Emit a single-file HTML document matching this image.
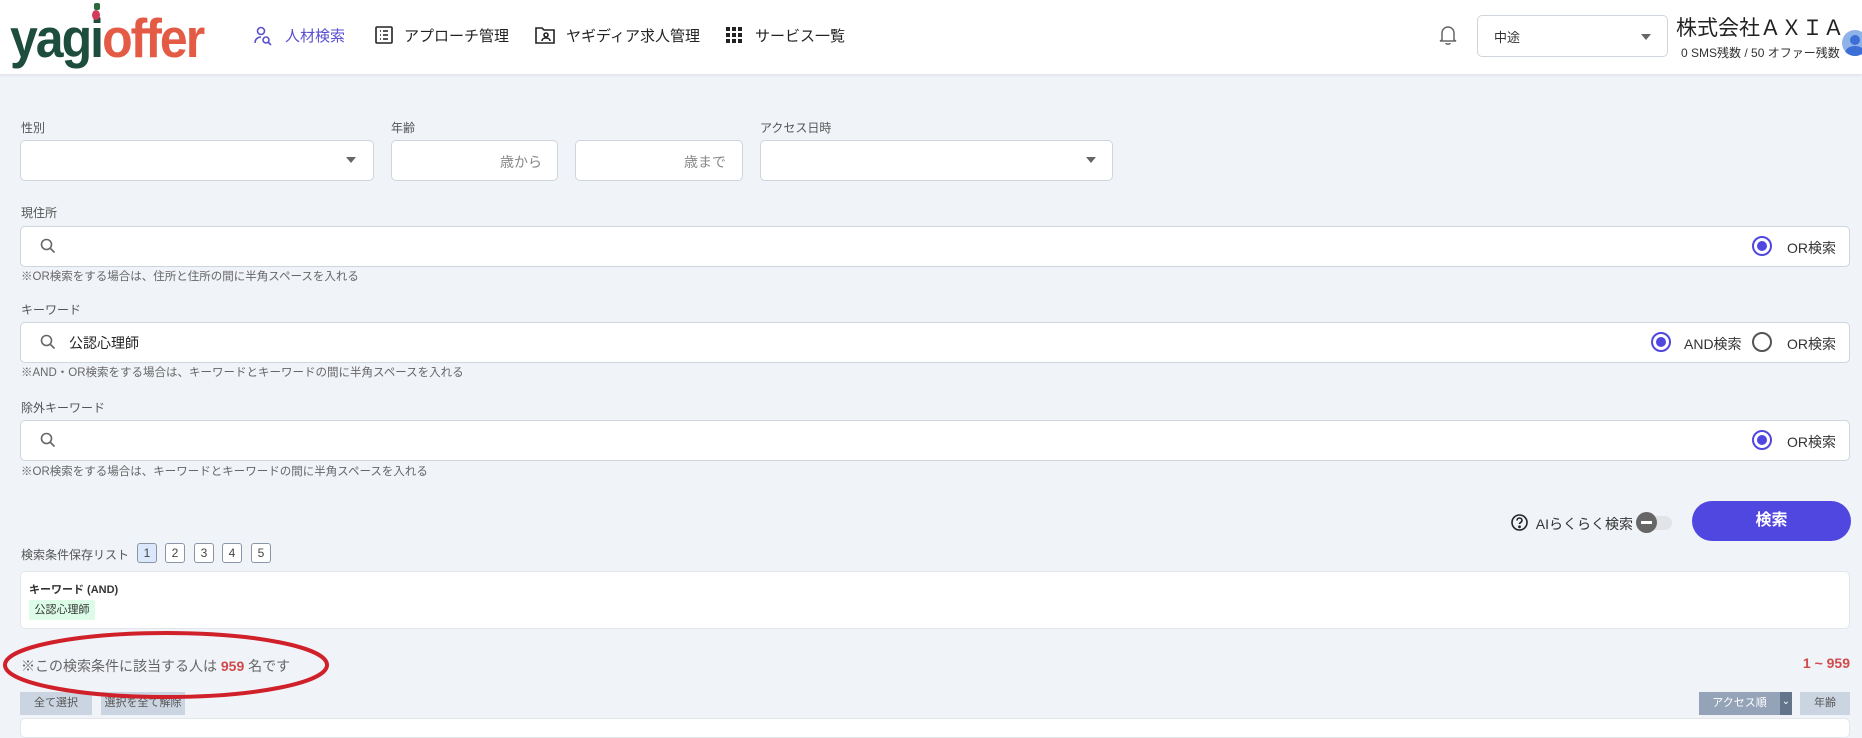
<!DOCTYPE html>
<html><head><meta charset="utf-8">
<style>
*{box-sizing:border-box;margin:0;padding:0}
body{width:1862px;height:725px;overflow:hidden;background:#f0f3f8;font-family:"Liberation Sans","Noto Sans CJK JP",sans-serif;color:#333;position:relative}
.a{position:absolute;white-space:nowrap}
.hdr{position:absolute;left:0;top:0;width:1862px;height:75px;background:#fff;border-bottom:1px solid #e3e6ea;box-shadow:0 1px 3px rgba(0,0,0,.06)}
.nav{font-size:15px;color:#222;top:25px}
.box{position:absolute;background:#fff;border:1px solid #cfd5dd;border-radius:5px}
.lbl{font-size:12px;color:#555}
.note{font-size:11.5px;color:#666}
.tri{position:absolute;width:0;height:0;border-left:5px solid transparent;border-right:5px solid transparent;border-top:6px solid #666}
.radio{position:absolute;width:20px;height:20px;border-radius:50%;border:2px solid #555;background:#fff}
.radio.on{border-color:#5046e0}
.radio.on::after{content:"";position:absolute;left:3px;top:3px;width:10px;height:10px;border-radius:50%;background:#5046e0}
.rt{font-size:14px;color:#333}
.num{position:absolute;top:543px;width:20px;height:20px;border:1px solid #8a96a8;border-radius:3px;font-size:12px;text-align:center;line-height:18px;color:#444;background:#fff}
.btn{position:absolute;font-size:12px;color:#fff;text-align:center}
</style></head><body>
<div class="hdr"></div>
<div class="a" style="left:10px;top:2px;font-size:50px;font-weight:bold;letter-spacing:-2px;line-height:66px;transform:scaleX(1.0) scaleY(1.1);transform-origin:left top"><span style="color:#1d4d3c">yagi</span><span style="color:#e35a45">offer</span></div>
<div class="a" style="left:92px;top:10px;width:8px;height:10px;border-radius:50%;background:#d43a5a"></div>
<div class="a" style="left:94px;top:3px;width:6px;height:7px;background:#2b6b3a;border-radius:2px"></div>

<svg class="a" style="left:253px;top:26px" width="20" height="20" viewBox="0 0 20 20" fill="none" stroke="#5a4fcf" stroke-width="1.6"><circle cx="8" cy="5" r="3.5"/><path d="M2 17c0-4 3-6 6-6"/><circle cx="13" cy="14" r="3"/><path d="M15 16l3 3"/></svg>
<div class="a nav" style="left:285px;color:#5a4fcf">人材検索</div>
<svg class="a" style="left:375px;top:26px" width="18" height="18" viewBox="0 0 18 18" fill="none" stroke="#222" stroke-width="1.6"><rect x="1" y="1" width="16" height="16" rx="1"/><path d="M5 5h1M5 9h1M5 13h1M8 5h5M8 9h5M8 13h5"/></svg>
<div class="a nav" style="left:404px">アプローチ管理</div>
<svg class="a" style="left:535px;top:26px" width="20" height="18" viewBox="0 0 20 18" fill="none" stroke="#222" stroke-width="1.6"><path d="M1 2h6l2 2h10v13H1z"/><circle cx="11" cy="9" r="2"/><path d="M7 15c0-2 2-3 4-3s4 1 4 3"/></svg>
<div class="a nav" style="left:566px">ヤギディア求人管理</div>
<svg class="a" style="left:726px;top:27px" width="16" height="16" viewBox="0 0 16 16" fill="#222"><rect x="0" y="0" width="4" height="4"/><rect x="6" y="0" width="4" height="4"/><rect x="12" y="0" width="4" height="4"/><rect x="0" y="6" width="4" height="4"/><rect x="6" y="6" width="4" height="4"/><rect x="12" y="6" width="4" height="4"/><rect x="0" y="12" width="4" height="4"/><rect x="6" y="12" width="4" height="4"/><rect x="12" y="12" width="4" height="4"/></svg>
<div class="a nav" style="left:755px">サービス一覧</div>

<svg class="a" style="left:1438px;top:24px" width="20" height="22" viewBox="0 0 20 22" fill="none" stroke="#666" stroke-width="1.5"><path d="M4 16V9a6 6 0 0112 0v7l2 1H2z"/><path d="M8 19c0 1.5 4 1.5 4 0"/></svg>
<div class="box" style="left:1477px;top:15px;width:191px;height:42px"></div>
<div class="a" style="left:1494px;top:27px;font-size:13px">中途</div>
<div class="tri" style="left:1641px;top:34px"></div>
<div class="a" style="left:1676px;top:12px;font-size:21px;color:#222">株式会社ＡＸＩＡ</div>
<div class="a" style="left:1681px;top:44px;font-size:12px;color:#333">0 SMS残数 / 50 オファー残数</div>
<div class="a" style="left:1842px;top:30px;width:26px;height:26px;border-radius:50%;background:#8fb3e8;overflow:hidden"><div style="position:absolute;left:8px;top:5px;width:10px;height:10px;border-radius:50%;background:#3b6fd6"></div><div style="position:absolute;left:3px;top:16px;width:20px;height:14px;border-radius:50%;background:#3b6fd6"></div></div>

<div class="a lbl" style="left:21px;top:119px">性別</div>
<div class="a lbl" style="left:391px;top:119px">年齢</div>
<div class="a lbl" style="left:760px;top:119px">アクセス日時</div>
<div class="box" style="left:20px;top:140px;width:354px;height:41px"></div><div class="tri" style="left:346px;top:157px"></div>
<div class="box" style="left:391px;top:140px;width:167px;height:41px"></div><div class="a" style="left:500px;top:152px;font-size:14px;color:#888">歳から</div>
<div class="box" style="left:575px;top:140px;width:168px;height:41px"></div><div class="a" style="left:684px;top:152px;font-size:14px;color:#888">歳まで</div>
<div class="box" style="left:760px;top:140px;width:353px;height:41px"></div><div class="tri" style="left:1086px;top:157px"></div>

<div class="a lbl" style="left:21px;top:204px">現住所</div>
<div class="box" style="left:20px;top:226px;width:1830px;height:41px"></div>
<svg class="a" style="left:40px;top:238px" width="16" height="16" viewBox="0 0 16 16" fill="none" stroke="#666" stroke-width="1.6"><circle cx="6.5" cy="6.5" r="5"/><path d="M10.5 10.5l4 4"/></svg>
<div class="radio on" style="left:1752px;top:236px"></div><div class="a rt" style="left:1787px;top:238px">OR検索</div>
<div class="a note" style="left:21px;top:268px">※OR検索をする場合は、住所と住所の間に半角スペースを入れる</div>

<div class="a lbl" style="left:21px;top:301px">キーワード</div>
<div class="box" style="left:20px;top:322px;width:1830px;height:41px"></div>
<svg class="a" style="left:40px;top:334px" width="16" height="16" viewBox="0 0 16 16" fill="none" stroke="#666" stroke-width="1.6"><circle cx="6.5" cy="6.5" r="5"/><path d="M10.5 10.5l4 4"/></svg>
<div class="a" style="left:69px;top:333px;font-size:14px;color:#222">公認心理師</div>
<div class="radio on" style="left:1651px;top:332px"></div><div class="a rt" style="left:1684px;top:334px">AND検索</div>
<div class="radio" style="left:1752px;top:332px"></div><div class="a rt" style="left:1787px;top:334px">OR検索</div>
<div class="a note" style="left:21px;top:364px">※AND・OR検索をする場合は、キーワードとキーワードの間に半角スペースを入れる</div>

<div class="a lbl" style="left:21px;top:399px">除外キーワード</div>
<div class="box" style="left:20px;top:420px;width:1830px;height:41px"></div>
<svg class="a" style="left:40px;top:432px" width="16" height="16" viewBox="0 0 16 16" fill="none" stroke="#666" stroke-width="1.6"><circle cx="6.5" cy="6.5" r="5"/><path d="M10.5 10.5l4 4"/></svg>
<div class="radio on" style="left:1752px;top:430px"></div><div class="a rt" style="left:1787px;top:432px">OR検索</div>
<div class="a note" style="left:21px;top:463px">※OR検索をする場合は、キーワードとキーワードの間に半角スペースを入れる</div>

<svg class="a" style="left:1511px;top:514px" width="17" height="17" viewBox="0 0 17 17" fill="none" stroke="#222" stroke-width="1.6"><circle cx="8.5" cy="8.5" r="7.5"/><path d="M6 6.5a2.5 2.5 0 115 0c0 1.8-2.5 2-2.5 3.5"/><circle cx="8.5" cy="12.8" r=".6" fill="#222"/></svg>
<div class="a" style="left:1531px;top:514px;width:102px;font-size:14px;color:#333;text-align:right">AIらくらく検索</div>
<div class="a" style="left:1640px;top:516px;width:32px;height:14px;border-radius:7px;background:#e2e4e8"></div>
<div class="a" style="left:1636px;top:512px;width:21px;height:21px;border-radius:50%;background:#666"><div style="position:absolute;left:5px;top:9px;width:11px;height:3px;background:#fff"></div></div>
<div class="a" style="left:1692px;top:501px;width:159px;height:40px;border-radius:20px;background:#5046e0;color:#fff;font-size:16px;font-weight:bold;text-align:center;line-height:40px">検索</div>

<div class="a lbl" style="left:21px;top:546px;font-size:12px">検索条件保存リスト</div>
<div class="num" style="left:137px;background:#dbe8fb">1</div>
<div class="num" style="left:165px">2</div>
<div class="num" style="left:194px">3</div>
<div class="num" style="left:222px">4</div>
<div class="num" style="left:251px">5</div>

<div class="box" style="left:20px;top:571px;width:1830px;height:58px;border-color:#e3e6ea"></div>
<div class="a" style="left:29px;top:581px;font-size:11px;font-weight:bold;color:#333">キーワード (AND)</div>
<div class="a" style="left:29px;top:600px;width:66px;height:20px;background:#dcfce7;border-radius:2px;font-size:11px;text-align:center;line-height:20px;color:#333">公認心理師</div>

<div class="a" style="left:21px;top:656px;font-size:14px;color:#666">※この検索条件に該当する人は <b style="color:#d04a4a">959</b> 名です</div>
<div class="a" style="left:1790px;top:655px;width:60px;text-align:right;font-size:14px;font-weight:bold;color:#d04a4a">1 ~ 959</div>

<div class="btn" style="left:20px;top:692px;width:72px;height:23px;background:#cbd5e1;line-height:23px;color:#555;font-size:11px">全て選択</div>
<div class="btn" style="left:101px;top:692px;width:84px;height:23px;background:#cbd5e1;line-height:23px;color:#555;font-size:11px">選択を全て解除</div>
<svg class="a" style="left:0;top:628px" width="335" height="75"><ellipse cx="166" cy="37" rx="161" ry="32" fill="none" stroke="#d0202a" stroke-width="4"/></svg>
<div class="btn" style="left:1699px;top:692px;width:81px;height:23px;background:#94a3b8;line-height:23px;font-size:11px">アクセス順</div>
<div class="btn" style="left:1780px;top:692px;width:12px;height:23px;background:#64748b;line-height:20px;font-size:10px">⌄</div>
<div class="btn" style="left:1800px;top:692px;width:50px;height:23px;background:#cbd5e1;line-height:23px;color:#555;font-size:11px">年齢</div>
<div class="box" style="left:20px;top:718px;width:1830px;height:20px;border-color:#e3e6ea"></div>
</body></html>
